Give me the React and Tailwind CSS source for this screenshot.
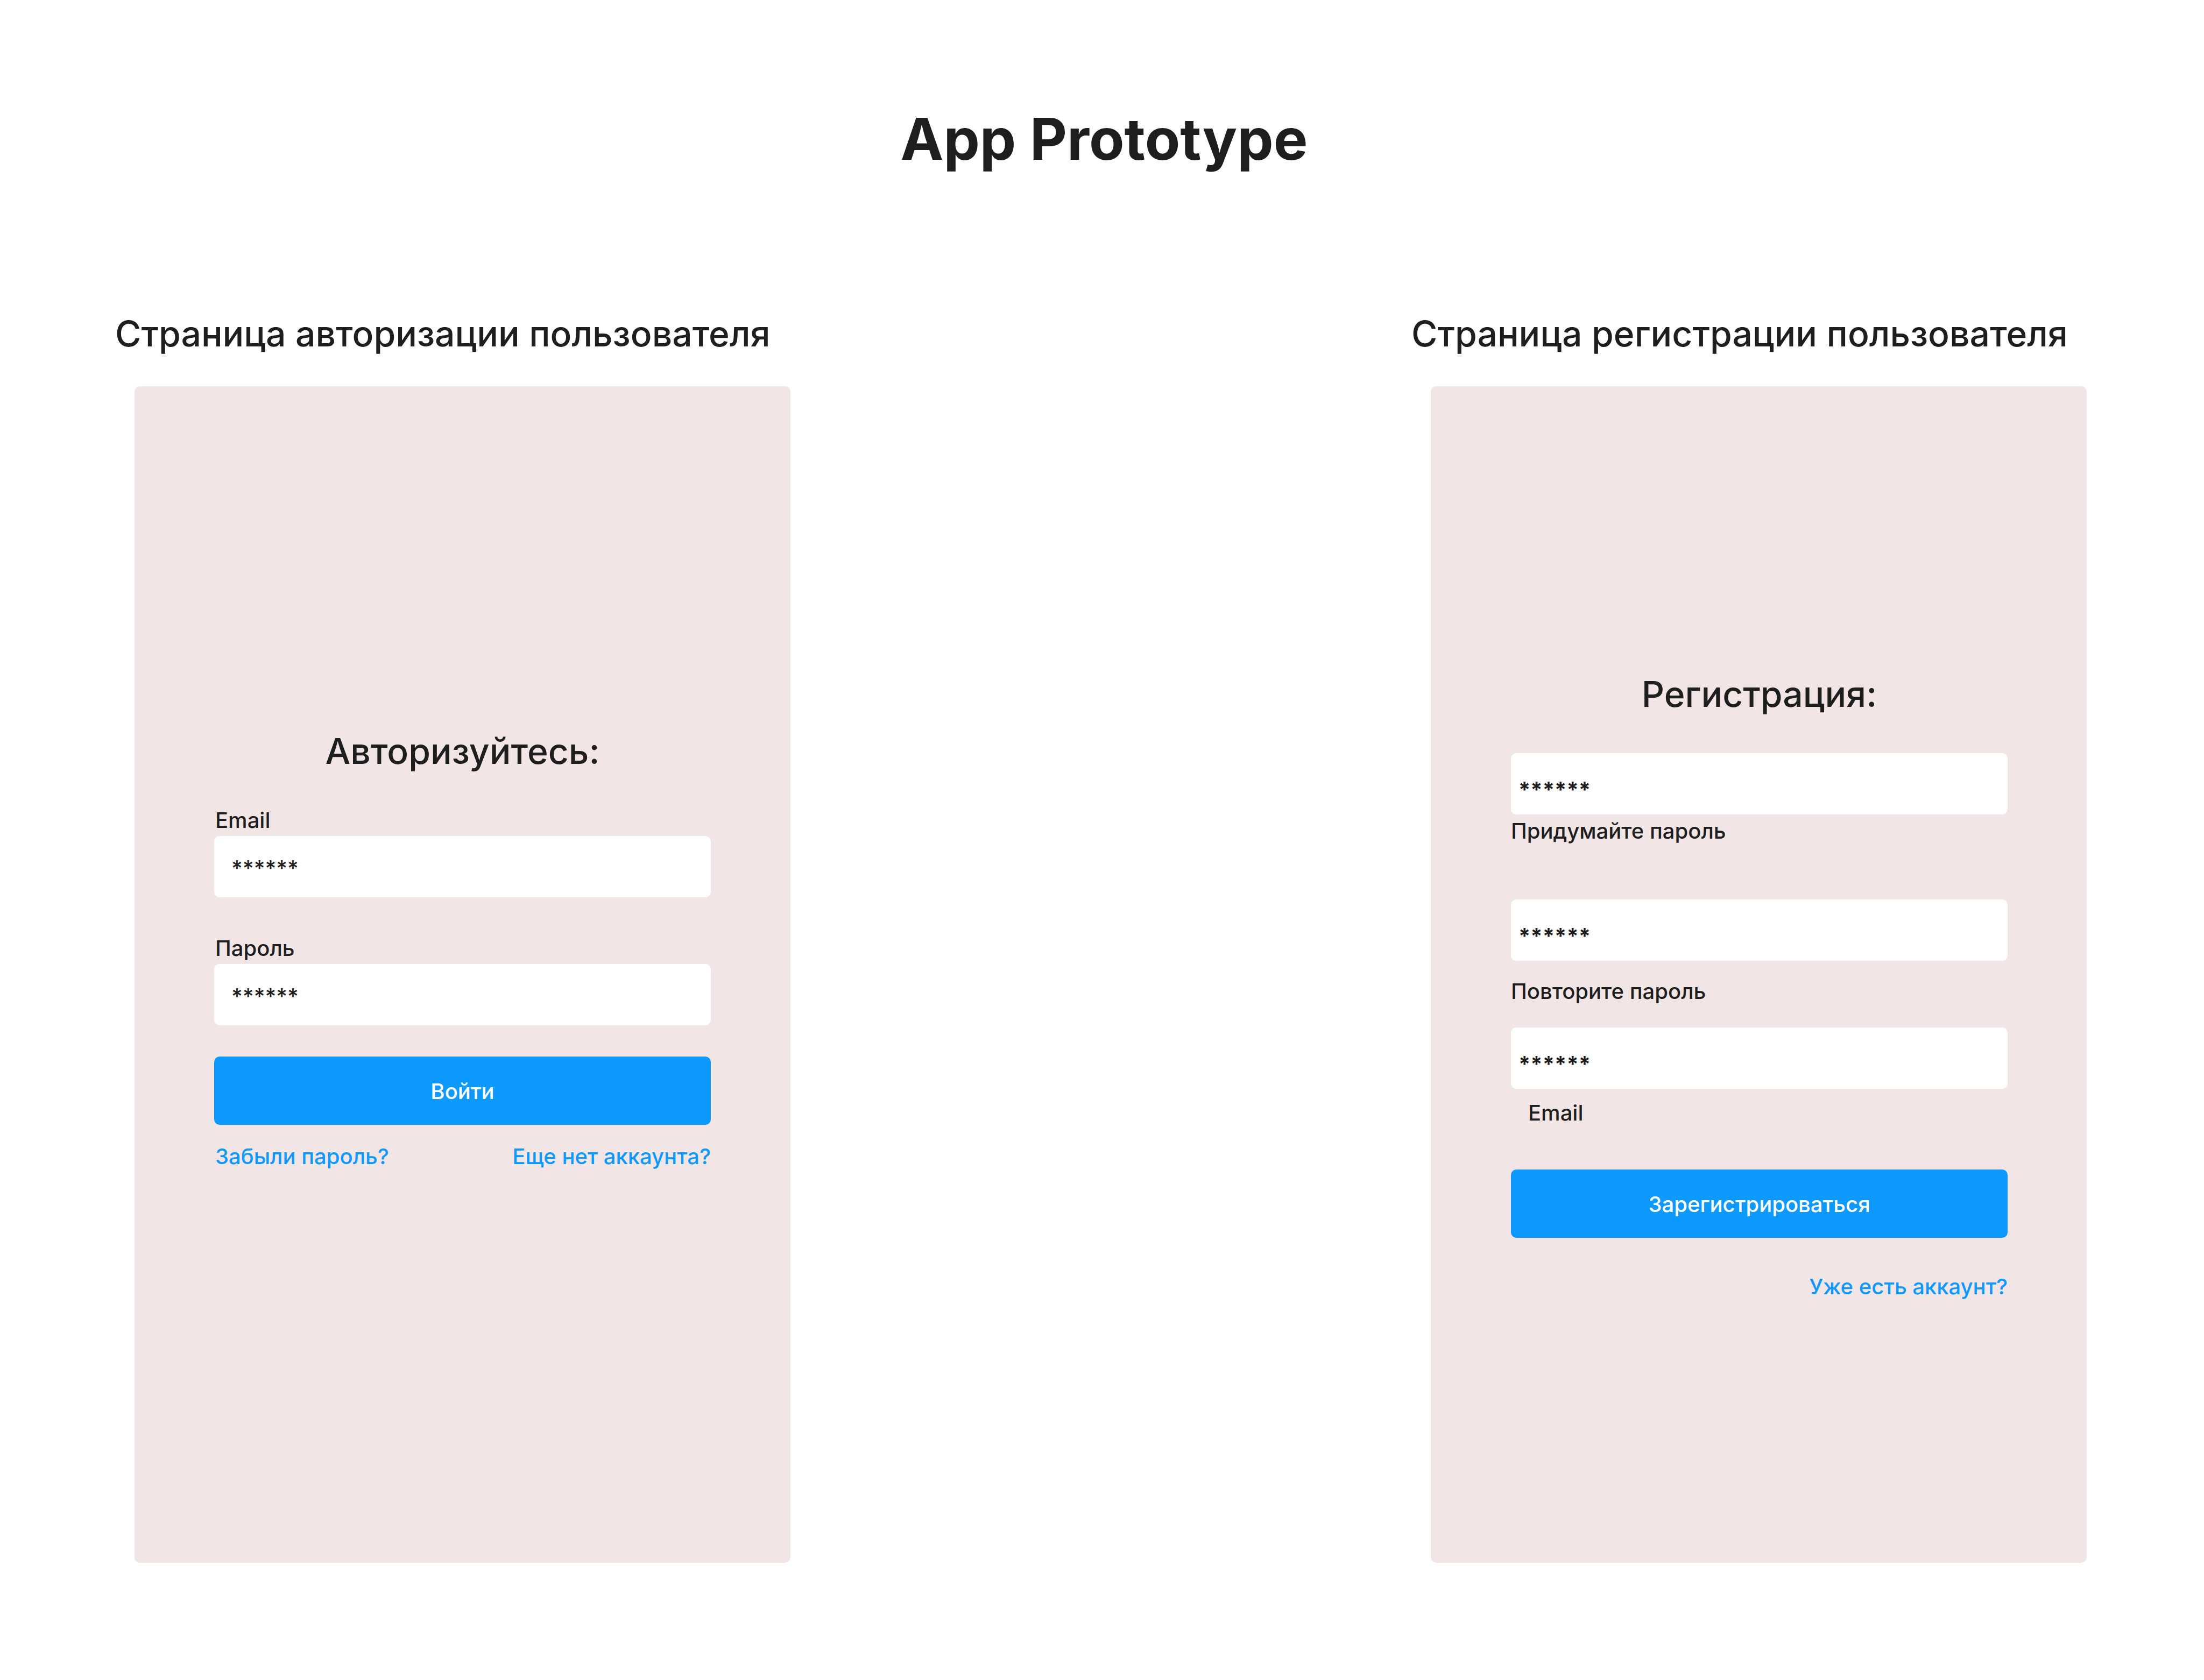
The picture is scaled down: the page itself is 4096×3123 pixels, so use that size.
const cx = (...parts) => parts.filter(Boolean).join(" ");

function Field({ id, type = "text", bold }) {
  return (
    <input
      id={id}
      type={type}
      defaultValue="******"
      autoComplete="off"
      className={cx(
        "block h-[114px] w-full rounded-[10px] bg-white text-[40px] leading-[50px] outline-none",
        bold ? "px-3.5 pt-5 font-bold" : "px-8 pt-1"
      )}
    />
  );
}

function Label({ htmlFor, className, children }) {
  return (
    <label htmlFor={htmlFor} className={cx("block text-[40px] leading-[50px]", className)}>
      {children}
    </label>
  );
}

function Submit({ children }) {
  return (
    <button
      type="submit"
      className="h-[127px] w-full rounded-[10px] bg-[#0d99ff] pt-0.5 text-[40px] leading-[50px] text-white"
    >
      {children}
    </button>
  );
}

function TextLink({ children }) {
  return (
    <a href="#" className="text-[40px] leading-[50px] text-[#0d99ff]">
      {children}
    </a>
  );
}

function Screen({ caption, title, className, children }) {
  return (
    <section className="flex flex-col">
      <h2 className="whitespace-nowrap text-[66px] leading-[84px]">{caption}</h2>
      <form
        onSubmit={(e) => e.preventDefault()}
        className={cx("ml-9 mt-14 flex-1 rounded-[10px] bg-[#f1e5e5] pb-20", className)}
      >
        <h3 className="text-center text-[66px] leading-[84px]">{title}</h3>
        {children}
      </form>
    </section>
  );
}

export default function App() {
  return (
    <main className="flex min-h-screen flex-col bg-white pt-48 pb-[218px] font-['Inter',sans-serif] font-medium text-[#1e1e1e]">
      <h1 className="pl-2 text-center text-[107px] leading-[132px] font-bold">App Prototype</h1>
      <div className="mt-[254px] grid flex-1 grid-cols-2 gap-x-[1154px] pr-[218px] pl-[214px]">
        <Screen
          caption="Страница авторизации пользователя"
          title="Авторизуйтесь:"
          className="px-[148px] pt-[636px]"
        >
          <Label htmlFor="login-email" className="mt-[62px] pl-0.5">Email</Label>
          <div className="mt-1"><Field id="login-email" /></div>
          <Label htmlFor="login-password" className="mt-[70px] pl-0.5">Пароль</Label>
          <div className="mt-1"><Field id="login-password" /></div>
          <div className="mt-[58px]"><Submit>Войти</Submit></div>
          <div className="mt-[34px] flex justify-between pl-0.5">
            <TextLink>Забыли пароль?</TextLink>
            <TextLink>Еще нет аккаунта?</TextLink>
          </div>
        </Screen>
        <Screen
          caption="Страница регистрации пользователя"
          title="Регистрация:"
          className="pt-[530px] pr-[147px] pl-[149px]"
        >
          <div className="mt-[68px]"><Field id="new-password" bold /></div>
          <Label htmlFor="new-password" className="mt-1.5">Придумайте пароль</Label>
          <div className="mt-[102px]"><Field id="repeat-password" bold /></div>
          <Label htmlFor="repeat-password" className="mt-8">Повторите пароль</Label>
          <div className="mt-[42px]"><Field id="new-email" bold /></div>
          <Label htmlFor="new-email" className="mt-5 pl-8">Email</Label>
          <div className="mt-20"><Submit>Зарегистрироваться</Submit></div>
          <div className="mt-[66px] flex justify-end">
            <TextLink>Уже есть аккаунт?</TextLink>
          </div>
        </Screen>
      </div>
    </main>
  );
}
